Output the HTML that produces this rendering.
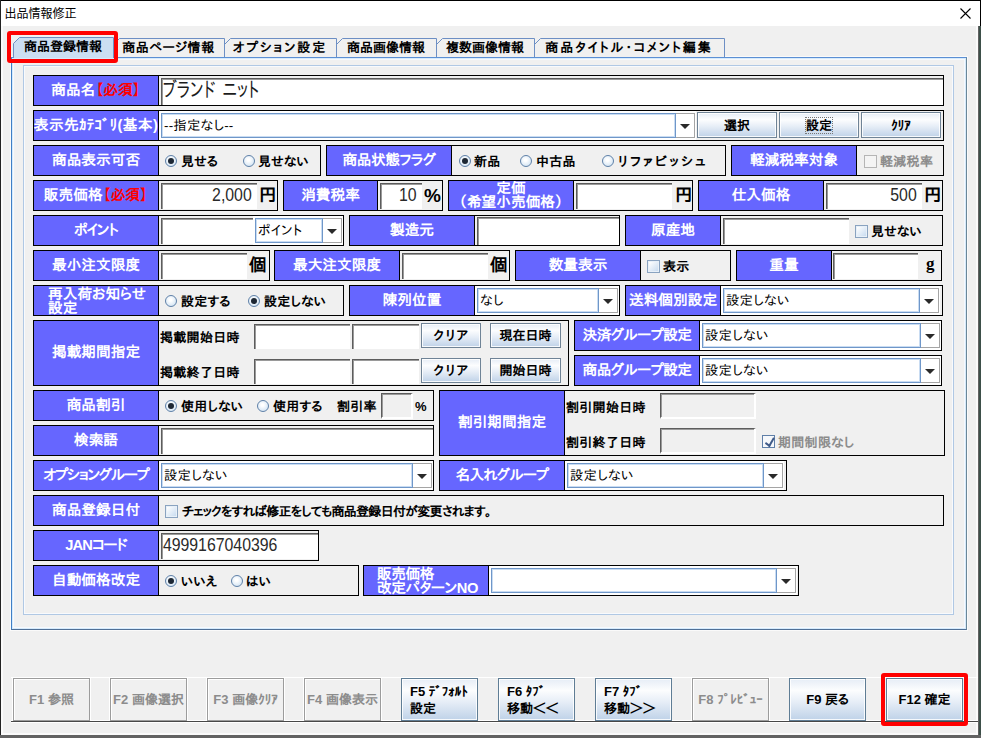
<!DOCTYPE html>
<html lang="ja"><head><meta charset="utf-8"><title>出品情報修正</title>
<style>
*{box-sizing:border-box;margin:0;padding:0}
html,body{width:981px;height:738px;overflow:hidden}
body{background:#f0f0f0;position:relative;font-family:"Liberation Sans","IPAPGothic","IPAGothic","Noto Sans CJK JP",sans-serif;color:#000}
div{position:absolute}
#win{left:0;top:0;width:981px;height:738px;background:#626262;overflow:hidden}
#edge{left:0;top:0;width:981px;height:26px;background:#000}
#edgel{left:0;top:0;width:1px;height:735px;background:#222}
#edger{left:979px;top:26px;width:2px;height:709px;background:#3d4f49}
#client{left:1px;top:26px;width:977px;height:709px;background:#f0f0f0}
#title{left:1px;top:1px;width:979px;height:25px;background:#fff}
#title .tt{left:3.5px;top:7px;font-size:12px;line-height:13px;font-family:"Liberation Sans","Noto Sans CJK JP",sans-serif;white-space:nowrap}
.lb{background:#6666ff;border:1px solid #000;color:#fff;font-weight:bold;font-size:14.7px;display:flex;align-items:center;justify-content:center;white-space:nowrap;z-index:2;overflow:hidden;font-family:"Liberation Sans","IPAPGothic","IPAGothic","Noto Sans CJK JP",sans-serif}
.lb span{display:block;position:relative;top:-1px}
.lb .req{color:#f00;font-weight:bold}
.lb.wide{letter-spacing:0.1px}
.lb.two span{line-height:14px;text-align:center;top:-1px}
.lb.left2{justify-content:flex-start;padding-left:14px}
.lb.left2 span{text-align:left;top:0px}
.lb.left2b{justify-content:flex-start;padding-left:13px}
.lb.left2b span{text-align:left;top:0px;letter-spacing:-0.4px}
.bx{border:1px solid #000;background:#f0f0f0;z-index:1}
.tf{background:#fff;border-style:solid;border-width:1px 0 0 1px;border-color:#5c5c5c;z-index:3;overflow:hidden;white-space:nowrap;display:flex;align-items:center}
.tf::before{content:"";position:absolute;left:0;top:0;right:0;bottom:0;border-style:solid;border-width:1px 0 0 1px;border-color:#9a9a9a;pointer-events:none}
.tf.dis{background:#f0f0f0;border-width:1px 2px 2px 1px;border-color:#5c5c5c #fff #fff #5c5c5c}
.tf span{font-size:21px;color:#1c1c1c;font-family:"Liberation Sans","IPAPGothic","IPAGothic","Noto Sans CJK JP",sans-serif;display:inline-block;position:relative;top:-2px}
.tf.big span{transform:scaleX(.745);transform-origin:left center;padding-left:1px;word-spacing:4px}
.tf.big.num span{transform:scaleX(.88);letter-spacing:0;font-size:18px;top:-1.5px;color:#2a2a2a}
.tf.r{justify-content:flex-end}
.tf.r span{transform-origin:right center;padding-right:5.5px;letter-spacing:0}
.cb{background:#fff;z-index:3;white-space:nowrap}
.cb .ct{position:absolute;left:2px;top:2px;bottom:2px;border:1px solid #6f97c9;box-shadow:inset 0 0 0 1px #c9dcf2;font-size:13.4px;line-height:24px;padding-left:2px;letter-spacing:.2px;font-family:"Liberation Sans","IPAPGothic","IPAGothic","Noto Sans CJK JP",sans-serif;background:#fff;overflow:hidden}
.cb .ca{position:absolute;right:1px;top:2px;bottom:2px;background:#fff;border:1px solid #a5a5a5;border-left:none}
.cb .ca i{position:absolute;left:4px;top:10px;border:5px solid transparent;border-top:5px solid #2a2a2a;border-bottom:0;width:0;height:0}
.bt{z-index:3;border:1px solid #6f8396;background:linear-gradient(#e6edf6 0%,#fcfdfe 28%,#e7eef7 55%,#bfd2e8 100%);display:flex;align-items:center;justify-content:center;font-weight:bold;font-size:13px;white-space:nowrap;box-shadow:inset 0 0 0 1px rgba(255,255,255,.85);font-family:"Liberation Sans","IPAPGothic","IPAGothic","Noto Sans CJK JP",sans-serif}
.bt span{display:block;position:relative;top:0px}
.bt .foc{text-decoration:none;outline:1px dotted #777;outline-offset:0}
.bt.ls1 span{letter-spacing:1.5px;padding-left:1px}
.bt.fb{font-size:13px;border-color:#5f7d95}
.bt.fb.dis{background:#f0f0f0;color:#8c8c8c;border-color:#9c9c9c;box-shadow:0 0 0 1px #fff, inset 1px 1px 0 #fff}
.bt.two2{justify-content:flex-start;padding-left:8px;line-height:17px;text-align:left}
.bt.two2 span{top:0px}
.rd{width:12px;height:12px;border-radius:50%;border:1px solid #5f81a8;background:radial-gradient(circle at 45% 40%,#fff 15%,#c6dcf0 100%);z-index:3}
.rd.on::after{content:"";position:absolute;left:2px;top:2px;width:6px;height:6px;border-radius:50%;background:#1d2733}
.ck{width:13px;height:13px;border:1px solid #8aa3c0;background:linear-gradient(135deg,#fff 10%,#c3d8ee);z-index:3;box-shadow:inset 0 0 0 1px #e8f0f8}
.ck.dis{background:#f4f4f4;border-color:#b5b5b5;box-shadow:none}
.ck.dis.on{border-color:#5f7fa8;background:#f6f8fb}
.ck.on::after{content:"";position:absolute;left:3.5px;top:0px;width:3.5px;height:7.5px;border:solid #3f5a88;border-width:0 2.2px 2.2px 0;transform:rotate(38deg) skewX(8deg)}
.tx{z-index:3;white-space:nowrap;line-height:13px;font-family:"Liberation Sans","IPAPGothic","IPAGothic","Noto Sans CJK JP",sans-serif}
.b13{font-weight:bold;font-size:13px;letter-spacing:0.3px;margin-left:-1px}
.b13.sp1{letter-spacing:2.6px}
.b13p{font-weight:bold;font-size:13px;font-family:"Liberation Sans","IPAPGothic","IPAGothic","Noto Sans CJK JP",sans-serif}
.b12{font-weight:bold;font-size:13px;line-height:13px;letter-spacing:-0.7px}
.bg{font-weight:bold;font-size:17px;font-family:"Liberation Serif",serif}
.b16{font-weight:bold;font-size:17.5px;line-height:17px}
.b16p{font-weight:bold;font-size:19px;line-height:17px;font-family:"Liberation Sans","IPAPGothic","IPAGothic","Noto Sans CJK JP",sans-serif}
.gray{color:#8c8c8c}
.tabt{font-weight:bold;font-size:13px;line-height:18px;text-align:center;white-space:nowrap;z-index:4;font-family:"Liberation Sans","IPAPGothic","IPAGothic","Noto Sans CJK JP",sans-serif}
#tp{left:11px;top:57px;width:956px;height:573px;border:1px solid;border-color:#5b8fd4 #6a8799 #4f6f96 #3f7fc6;box-shadow:0 0 0 1px #fafafa, inset 0 0 0 1px #d6eafb, inset 0 0 0 2px #f6f9fd;z-index:1}
#ip{left:23px;top:65px;width:931px;height:550px;border:1px solid #b0c8e4;box-shadow:inset 0 0 0 1px #f8fafd;z-index:1}
#red1{left:7px;top:31px;width:111px;height:32px;border:4px solid #ff0000;border-radius:3px;z-index:9}
#red2{left:881px;top:673px;width:87px;height:53px;border:4px solid #ff0000;border-radius:3px;z-index:9}
#wline{left:11px;top:677px;width:967px;height:1px;background:#fff;z-index:2}
#wline2{left:11px;top:720px;width:967px;height:1px;background:#fff;z-index:2}
#bline{left:11px;top:721px;width:967px;height:1px;background:#484848;z-index:5;box-shadow:0 1px 0 #fff}
#frame{left:1px;top:26px;width:977px;height:709px;border:2px solid #fafafa;border-top:none;z-index:1}
</style></head><body>
<div id="win"><div id="edge"></div><div id="client"></div><div id="edgel"></div><div id="edger"></div><div id="frame"></div>
<div id="title"><div class="tt">出品情報修正</div>
<svg style="position:absolute;left:958px;top:6px" width="13" height="13" viewBox="0 0 13 13"><path d="M1.5 1.5 L11.5 11.5 M11.5 1.5 L1.5 11.5" stroke="#000" stroke-width="1.1" fill="none"/></svg>
</div>
<svg style="position:absolute;left:0;top:0;z-index:2" width="981" height="70" viewBox="0 0 981 70"><path d="M534.5 57 V44.5 L540.5 38.5 H724.5 V57" fill="#f0f0f0" stroke="#6d8fc4" stroke-width="1"/><path d="M436.5 57 V44.5 L442.5 38.5 H534.5 V57" fill="#f0f0f0" stroke="#6d8fc4" stroke-width="1"/><path d="M336.5 57 V44.5 L342.5 38.5 H436.5 V57" fill="#f0f0f0" stroke="#6d8fc4" stroke-width="1"/><path d="M224.5 57 V44.5 L230.5 38.5 H336.5 V57" fill="#f0f0f0" stroke="#6d8fc4" stroke-width="1"/><path d="M113.5 57 V44.5 L119.5 38.5 H224.5 V57" fill="#f0f0f0" stroke="#6d8fc4" stroke-width="1"/><path d="M13.5 58 V43.5 L19.5 37.5 H113.5 V58" fill="#cbdef2" stroke="#6d8fc4" stroke-width="1"/></svg><div class="tabt" style="left:13px;width:100px;top:38px;">商品登録情報</div><div class="tabt" style="left:113px;width:111px;top:39px;letter-spacing:0.6px">商品ページ情報</div><div class="tabt" style="left:224px;width:112px;top:39px;letter-spacing:1.9px">オプション設定</div><div class="tabt" style="left:336px;width:100px;top:39px;">商品画像情報</div><div class="tabt" style="left:436px;width:98px;top:39px;">複数画像情報</div><div class="tabt" style="left:534px;width:190px;top:39px;letter-spacing:1.9px">商品タイトル・コメント編集</div>
<div id="tp"></div><div id="ip"></div>
<div id="red1"></div>
<div class="bx" style="left:33px;top:75px;width:911px;height:31px"></div>
<div class="lb " style="left:33px;top:75px;width:126px;height:31px"><span>商品名<b class="req">【必須】</b></span></div>
<div class="tf big" style="left:161px;top:78px;width:782px;height:27px"><span>ブランド ニット</span></div>
<div class="bx" style="left:33px;top:110px;width:911px;height:31px"></div>
<div class="lb wide" style="left:33px;top:110px;width:126px;height:31px"><span style="letter-spacing:0.4px">表示先ｶﾃｺﾞﾘ(基本)</span></div>
<div class="cb" style="left:159px;top:111px;width:537px;height:29px"><span class="ct" style="right:20px">--指定なし--</span><span class="ca" style="width:19px"><i></i></span></div>
<div class="bt " style="left:697px;top:112px;width:80px;height:26px"><span>選択</span></div>
<div class="bt " style="left:779px;top:112px;width:80px;height:26px"><span><u class="foc">設定</u></span></div>
<div class="bt " style="left:861px;top:112px;width:80px;height:26px"><span>ｸﾘｱ</span></div>
<div class="bx" style="left:33px;top:145px;width:288px;height:31px"></div>
<div class="lb " style="left:33px;top:145px;width:126px;height:31px"><span>商品表示可否</span></div>
<div class="rd on" style="left:165px;top:155px"></div>
<div class="tx b13" style="left:182px;top:155px">見せる</div>
<div class="rd" style="left:243px;top:155px"></div>
<div class="tx b13" style="left:259px;top:155px">見せない</div>
<div class="bx" style="left:326px;top:145px;width:400px;height:31px"></div>
<div class="lb " style="left:326px;top:145px;width:126px;height:31px"><span style="letter-spacing:-0.45px">商品状態フラグ</span></div>
<div class="rd on" style="left:459px;top:155px"></div>
<div class="tx b13" style="left:475px;top:155px">新品</div>
<div class="rd" style="left:520px;top:155px"></div>
<div class="tx b13" style="left:537px;top:155px">中古品</div>
<div class="rd" style="left:602px;top:155px"></div>
<div class="tx b13 sp1" style="left:619px;top:155px">リファビッシュ</div>
<div class="bx" style="left:731px;top:145px;width:213px;height:31px"></div>
<div class="lb " style="left:731px;top:145px;width:126px;height:31px"><span>軽減税率対象</span></div>
<div class="ck dis" style="left:864px;top:155px"></div>
<div class="tx b13 gray" style="left:881px;top:155px">軽減税率</div>
<div class="bx" style="left:33px;top:180px;width:245px;height:31px"></div>
<div class="lb " style="left:33px;top:180px;width:126px;height:31px"><span>販売価格<b class="req">【必須】</b></span></div>
<div class="tf big r num" style="left:161px;top:183px;width:96px;height:26px"><span>2,000</span></div>
<div class="tx b16" style="left:259px;top:187px">円</div>
<div class="bx" style="left:283px;top:180px;width:160px;height:31px"></div>
<div class="lb " style="left:283px;top:180px;width:95px;height:31px"><span>消費税率</span></div>
<div class="tf big r num" style="left:380px;top:183px;width:42px;height:26px"><span>10</span></div>
<div class="tx b16p" style="left:424px;top:187px">%</div>
<div class="bx" style="left:448px;top:180px;width:245px;height:31px"></div>
<div class="lb two" style="left:448px;top:180px;width:126px;height:31px"><span>定価<br>（希望小売価格）</span></div>
<div class="tf big r" style="left:576px;top:183px;width:96px;height:26px"><span></span></div>
<div class="tx b16" style="left:675px;top:187px">円</div>
<div class="bx" style="left:698px;top:180px;width:245px;height:31px"></div>
<div class="lb " style="left:698px;top:180px;width:126px;height:31px"><span>仕入価格</span></div>
<div class="tf big r num" style="left:826px;top:183px;width:96px;height:26px"><span>500</span></div>
<div class="tx b16" style="left:924px;top:187px">円</div>
<div class="bx" style="left:33px;top:215px;width:311px;height:31px"></div>
<div class="lb " style="left:33px;top:215px;width:126px;height:31px"><span style="letter-spacing:-1px">ポイント</span></div>
<div class="tf big" style="left:161px;top:218px;width:93px;height:26px"><span></span></div>
<div class="cb" style="left:253px;top:216px;width:90px;height:29px"><span class="ct" style="right:20px">ポイント</span><span class="ca" style="width:19px"><i></i></span></div>
<div class="bx" style="left:349px;top:215px;width:271px;height:31px"></div>
<div class="lb " style="left:349px;top:215px;width:126px;height:31px"><span>製造元</span></div>
<div class="tf big" style="left:477px;top:217px;width:142px;height:28px"><span></span></div>
<div class="bx" style="left:625px;top:215px;width:318px;height:31px"></div>
<div class="lb " style="left:625px;top:215px;width:96px;height:31px"><span>原産地</span></div>
<div class="tf big" style="left:723px;top:218px;width:126px;height:26px"><span></span></div>
<div class="ck " style="left:855px;top:225px"></div>
<div class="tx b13" style="left:872px;top:225px">見せない</div>
<div class="bx" style="left:33px;top:250px;width:237px;height:31px"></div>
<div class="lb " style="left:33px;top:250px;width:126px;height:31px"><span>最小注文限度</span></div>
<div class="tf big" style="left:161px;top:253px;width:86px;height:26px"><span></span></div>
<div class="tx b16" style="left:249px;top:257px">個</div>
<div class="bx" style="left:274px;top:250px;width:236px;height:31px"></div>
<div class="lb " style="left:274px;top:250px;width:126px;height:31px"><span>最大注文限度</span></div>
<div class="tf big" style="left:402px;top:253px;width:86px;height:26px"><span></span></div>
<div class="tx b16" style="left:490px;top:257px">個</div>
<div class="bx" style="left:515px;top:250px;width:216px;height:31px"></div>
<div class="lb " style="left:515px;top:250px;width:126px;height:31px"><span>数量表示</span></div>
<div class="ck " style="left:647px;top:260px"></div>
<div class="tx b13" style="left:664px;top:260px">表示</div>
<div class="bx" style="left:736px;top:250px;width:206px;height:31px"></div>
<div class="lb " style="left:736px;top:250px;width:96px;height:31px"><span>重量</span></div>
<div class="tf big" style="left:833px;top:253px;width:85px;height:26px"><span></span></div>
<div class="tx bg" style="left:926px;top:257px">g</div>
<div class="bx" style="left:33px;top:285px;width:311px;height:31px"></div>
<div class="lb two left2" style="left:33px;top:285px;width:126px;height:31px"><span>再入荷お知らせ<br>設定</span></div>
<div class="rd" style="left:165px;top:295px"></div>
<div class="tx b13" style="left:182px;top:295px">設定する</div>
<div class="rd on" style="left:248px;top:295px"></div>
<div class="tx b13" style="left:265px;top:295px">設定しない</div>
<div class="bx" style="left:349px;top:285px;width:271px;height:31px"></div>
<div class="lb " style="left:349px;top:285px;width:126px;height:31px"><span>陳列位置</span></div>
<div class="cb" style="left:475px;top:286px;width:144px;height:29px"><span class="ct" style="right:20px">なし</span><span class="ca" style="width:19px"><i></i></span></div>
<div class="bx" style="left:625px;top:285px;width:318px;height:31px"></div>
<div class="lb n" style="left:625px;top:285px;width:96px;height:31px"><span>送料個別設定</span></div>
<div class="cb" style="left:721px;top:286px;width:219px;height:29px"><span class="ct" style="right:20px">設定しない</span><span class="ca" style="width:19px"><i></i></span></div>
<div class="bx" style="left:33px;top:320px;width:536px;height:66px"></div>
<div class="lb " style="left:33px;top:320px;width:126px;height:66px"><span>掲載期間指定</span></div>
<div class="tx b13" style="left:161px;top:331px">掲載開始日時</div>
<div class="tf thin" style="left:254px;top:324px;width:96px;height:25px"><span></span></div>
<div class="tf thin" style="left:352px;top:324px;width:67px;height:25px"><span></span></div>
<div class="bt ls1" style="left:421px;top:323px;width:60px;height:25px"><span>クリア</span></div>
<div class="bt " style="left:490px;top:323px;width:71px;height:25px"><span>現在日時</span></div>
<div class="tx b13" style="left:161px;top:366px">掲載終了日時</div>
<div class="tf thin" style="left:254px;top:359px;width:96px;height:25px"><span></span></div>
<div class="tf thin" style="left:352px;top:359px;width:67px;height:25px"><span></span></div>
<div class="bt ls1" style="left:421px;top:358px;width:60px;height:25px"><span>クリア</span></div>
<div class="bt " style="left:490px;top:358px;width:71px;height:25px"><span>開始日時</span></div>
<div class="bx" style="left:574px;top:320px;width:368px;height:31px"></div>
<div class="lb " style="left:574px;top:320px;width:126px;height:31px"><span style="letter-spacing:-0.6px">決済グループ設定</span></div>
<div class="cb" style="left:700px;top:321px;width:241px;height:29px"><span class="ct" style="right:20px">設定しない</span><span class="ca" style="width:19px"><i></i></span></div>
<div class="bx" style="left:574px;top:355px;width:368px;height:31px"></div>
<div class="lb " style="left:574px;top:355px;width:126px;height:31px"><span style="letter-spacing:-0.6px">商品グループ設定</span></div>
<div class="cb" style="left:700px;top:356px;width:241px;height:29px"><span class="ct" style="right:20px">設定しない</span><span class="ca" style="width:19px"><i></i></span></div>
<div class="bx" style="left:33px;top:390px;width:401px;height:31px"></div>
<div class="lb " style="left:33px;top:390px;width:126px;height:31px"><span>商品割引</span></div>
<div class="rd on" style="left:165px;top:400px"></div>
<div class="tx b13" style="left:182px;top:400px">使用しない</div>
<div class="rd" style="left:257px;top:400px"></div>
<div class="tx b13" style="left:274px;top:400px">使用する</div>
<div class="tx b13" style="left:338px;top:400px">割引率</div>
<div class="tf thin dis" style="left:381px;top:393px;width:32px;height:26px"><span></span></div>
<div class="tx b13p" style="left:415px;top:400px">%</div>
<div class="bx" style="left:439px;top:390px;width:506px;height:66px"></div>
<div class="lb " style="left:439px;top:390px;width:126px;height:66px"><span>割引期間指定</span></div>
<div class="tx b13" style="left:567px;top:401px">割引開始日時</div>
<div class="tf thin dis" style="left:660px;top:393px;width:96px;height:26px"><span></span></div>
<div class="tx b13" style="left:567px;top:436px">割引終了日時</div>
<div class="tf thin dis" style="left:660px;top:428px;width:96px;height:26px"><span></span></div>
<div class="ck dis on" style="left:762px;top:435px"></div>
<div class="tx b13 gray" style="left:779px;top:436px">期間制限なし</div>
<div class="bx" style="left:33px;top:425px;width:401px;height:31px"></div>
<div class="lb " style="left:33px;top:425px;width:126px;height:31px"><span>検索語</span></div>
<div class="tf big" style="left:161px;top:428px;width:272px;height:26px"><span></span></div>
<div class="bx" style="left:33px;top:460px;width:401px;height:31px"></div>
<div class="lb " style="left:33px;top:460px;width:126px;height:31px"><span style="letter-spacing:-1.3px">オプショングループ</span></div>
<div class="cb" style="left:159px;top:461px;width:274px;height:29px"><span class="ct" style="right:20px">設定しない</span><span class="ca" style="width:19px"><i></i></span></div>
<div class="bx" style="left:439px;top:460px;width:348px;height:31px"></div>
<div class="lb " style="left:439px;top:460px;width:126px;height:31px"><span style="letter-spacing:-0.85px">名入れグループ</span></div>
<div class="cb" style="left:565px;top:461px;width:219px;height:29px"><span class="ct" style="right:20px">設定しない</span><span class="ca" style="width:19px"><i></i></span></div>
<div class="bx" style="left:33px;top:495px;width:911px;height:31px"></div>
<div class="lb " style="left:33px;top:495px;width:126px;height:31px"><span>商品登録日付</span></div>
<div class="ck " style="left:165px;top:505px"></div>
<div class="tx b12" style="left:182px;top:505px">チェックをすれば修正をしても商品登録日付が変更されます。</div>
<div class="bx" style="left:33px;top:530px;width:286px;height:31px"></div>
<div class="lb " style="left:33px;top:530px;width:126px;height:31px"><span style="letter-spacing:-0.9px">JANコード</span></div>
<div class="tf big num" style="left:161px;top:533px;width:157px;height:26px"><span>4999167040396</span></div>
<div class="bx" style="left:33px;top:565px;width:326px;height:31px"></div>
<div class="lb " style="left:33px;top:565px;width:126px;height:31px"><span>自動価格改定</span></div>
<div class="rd on" style="left:165px;top:575px"></div>
<div class="tx b13" style="left:182px;top:575px">いいえ</div>
<div class="rd" style="left:231px;top:575px"></div>
<div class="tx b13" style="left:247px;top:575px">はい</div>
<div class="bx" style="left:363px;top:565px;width:436px;height:31px"></div>
<div class="lb two left2b" style="left:363px;top:565px;width:126px;height:31px"><span>販売価格<br>改定パターンNO</span></div>
<div class="cb" style="left:489px;top:566px;width:308px;height:29px"><span class="ct" style="right:20px"></span><span class="ca" style="width:19px"><i></i></span></div>
<div class="bt fb dis" style="left:13px;top:678px;width:77px;height:43px"><span>F1 参照</span></div>
<div class="bt fb dis" style="left:110px;top:678px;width:77px;height:43px"><span>F2 画像選択</span></div>
<div class="bt fb dis" style="left:207px;top:678px;width:77px;height:43px"><span>F3 画像ｸﾘｱ</span></div>
<div class="bt fb dis" style="left:304px;top:678px;width:77px;height:43px"><span>F4 画像表示</span></div>
<div class="bt fb two2" style="left:401px;top:678px;width:77px;height:43px"><span>F5 ﾃﾞﾌｫﾙﾄ<br>設定</span></div>
<div class="bt fb two2" style="left:498px;top:678px;width:77px;height:43px"><span>F6 ﾀﾌﾞ<br>移動＜＜</span></div>
<div class="bt fb two2" style="left:595px;top:678px;width:77px;height:43px"><span>F7 ﾀﾌﾞ<br>移動＞＞</span></div>
<div class="bt fb dis" style="left:692px;top:678px;width:77px;height:43px"><span>F8 ﾌﾟﾚﾋﾞｭｰ</span></div>
<div class="bt fb" style="left:789px;top:678px;width:77px;height:43px"><span>F9 戻る</span></div>
<div class="bt fb" style="left:886px;top:678px;width:77px;height:43px"><span>F12 確定</span></div>
<div id="wline"></div><div id="wline2"></div>
<div id="bline"></div>
<div id="red2"></div>
</div>
</body></html>
